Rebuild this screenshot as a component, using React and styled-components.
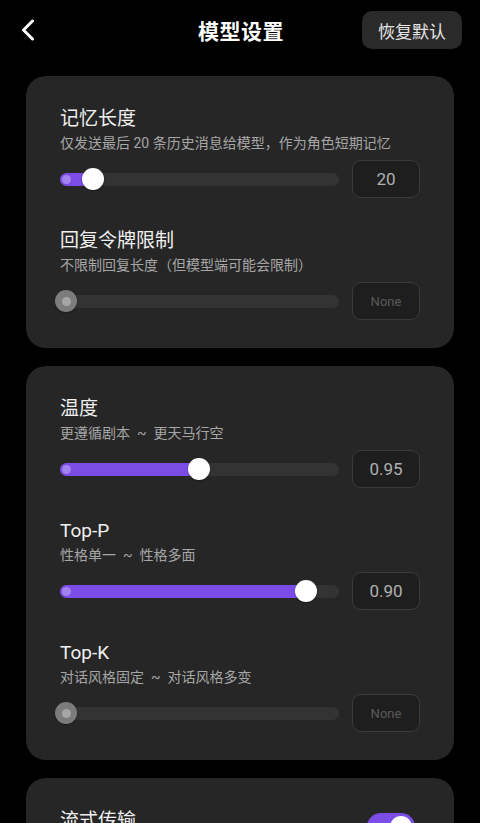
import React from 'react';
import styled, { createGlobalStyle } from 'styled-components';

const GlobalStyle = createGlobalStyle`
  html, body {
    margin: 0;
    padding: 0;
    background: #000;
  }
  body {
    font-family: Roboto, "Noto Sans CJK SC", "Noto Sans", sans-serif;
    color: #f0f0f0;
    -webkit-font-smoothing: antialiased;
  }
  * { box-sizing: border-box; }
`;

const Page = styled.div`
  min-height: 823px;
  background: #000;
  padding-bottom: 24px;
`;

const Header = styled.header`
  display: grid;
  grid-template-columns: 1fr auto 1fr;
  align-items: center;
  height: 38px;
  margin: 11px 18px 27px 20px;
`;

const BackButton = styled.button`
  justify-self: start;
  display: flex;
  align-items: center;
  justify-content: center;
  width: 16px;
  height: 24px;
  padding: 0;
  border: none;
  background: transparent;
  cursor: pointer;
`;

const Title = styled.h1`
  margin: 0;
  font-size: 21px;
  font-weight: 700;
  color: #fff;
  letter-spacing: 0.5px;
`;

const ResetButton = styled.button`
  justify-self: end;
  height: 38px;
  padding: 0 16px;
  border: none;
  border-radius: 10px;
  background: #2a2a2a;
  color: #e6e6e6;
  font-family: inherit;
  font-size: 17px;
  cursor: pointer;
`;

const Cards = styled.div`
  display: flex;
  flex-direction: column;
  gap: 18px;
  margin: 0 26px;
`;

const Card = styled.section`
  display: flex;
  flex-direction: column;
  gap: 28px;
  padding: 28px 34px 28px;
  border-radius: 20px;
  background: #262626;
`;

const Item = styled.div`
  display: flex;
  flex-direction: column;
`;

const ItemTitle = styled.div`
  padding-top: 2px;
  font-size: 19px;
  line-height: 26px;
  color: #f0f0f0;
`;

const ItemDesc = styled.div`
  margin-top: 2px;
  font-size: 14px;
  line-height: 18px;
  color: #a6a6a6;
  white-space: pre;
`;

const SliderRow = styled.div`
  display: flex;
  align-items: center;
  gap: 13px;
  height: 38px;
  margin-top: 8px;
`;

const Track = styled.div`
  position: relative;
  flex: 1;
  height: 13px;
  border-radius: 7px;
  background: #333333;
`;

const Fill = styled.div`
  position: absolute;
  left: 0;
  top: 0;
  bottom: 0;
  border-radius: 7px;
  background: #7b4de6;
`;

const StartDot = styled.span`
  position: absolute;
  left: 2px;
  top: 50%;
  width: 9px;
  height: 9px;
  margin-top: -4.5px;
  border-radius: 50%;
  background: ${p => (p.$off ? '#a6a6a6' : '#a283f0')};
`;

const Thumb = styled.span`
  position: absolute;
  top: 50%;
  width: 22px;
  height: 22px;
  margin: -11px 0 0 -11px;
  border-radius: 50%;
  background: ${p => (p.$off ? '#7c7c7c' : '#fff')};
  box-shadow: 0 1px 2px rgba(0, 0, 0, 0.3);
`;

const ValueBox = styled.div`
  flex: 0 0 68px;
  height: 38px;
  display: flex;
  align-items: center;
  justify-content: center;
  border: 1.5px solid #3a3a3f;
  border-radius: 9px;
  background: #1e1e1e;
  font-family: Roboto, "Noto Sans CJK SC", sans-serif;
  font-size: ${p => (p.$off ? '13px' : '17px')};
  color: ${p => (p.$off ? '#5a5a5a' : '#b0b0b0')};
`;

const ToggleRow = styled.div`
  display: flex;
  justify-content: space-between;
  align-items: flex-start;
`;

const Switch = styled.button`
  position: relative;
  width: 48px;
  height: 28px;
  margin: 7px 5px 0 0;
  padding: 0;
  border: none;
  border-radius: 14px;
  background: ${p => (p.$on ? '#7b4de6' : '#444')};
  cursor: pointer;

  &::after {
    content: '';
    position: absolute;
    top: 3px;
    left: ${p => (p.$on ? '23px' : '3px')};
    width: 22px;
    height: 22px;
    border-radius: 50%;
    background: #fff;
  }
`;

function Slider({ value, off }) {
  const pos = `calc(6px + (100% - 12px) * ${value})`;
  return (
    <Track role="slider" aria-valuenow={value}>
      {!off && <Fill style={{ width: pos }} />}
      {!off && <StartDot />}
      <Thumb $off={off} style={{ left: pos }}>
        {off && <StartDot $off style={{ left: 6.5 }} />}
      </Thumb>
    </Track>
  );
}

function SliderItem({ title, desc, value, display }) {
  const off = display === 'None';
  return (
    <Item>
      <ItemTitle>{title}</ItemTitle>
      <ItemDesc>{desc}</ItemDesc>
      <SliderRow>
        <Slider value={value} off={off} />
        <ValueBox $off={off}>{display}</ValueBox>
      </SliderRow>
    </Item>
  );
}

const groups = [
  [
    { title: '记忆长度', desc: '仅发送最后 20 条历史消息给模型，作为角色短期记忆', value: 0.1, display: '20' },
    { title: '回复令牌限制', desc: '不限制回复长度（但模型端可能会限制）', value: 0, display: 'None' },
  ],
  [
    { title: '温度', desc: '更遵循剧本  ~  更天马行空', value: 0.498, display: '0.95' },
    { title: 'Top-P', desc: '性格单一  ~  性格多面', value: 0.9, display: '0.90' },
    { title: 'Top-K', desc: '对话风格固定  ~  对话风格多变', value: 0, display: 'None' },
  ],
];

export default function App() {
  return (
    <Page>
      <GlobalStyle />
      <Header>
        <BackButton aria-label="返回">
          <svg width="14" height="22" viewBox="0 0 14 22" fill="none">
            <path d="M11.5 2 L2.5 11 L11.5 20" stroke="#fff" strokeWidth="3" strokeLinecap="round" strokeLinejoin="round" />
          </svg>
        </BackButton>
        <Title>模型设置</Title>
        <ResetButton>恢复默认</ResetButton>
      </Header>
      <Cards>
        {groups.map((items, i) => (
          <Card key={i}>
            {items.map(it => (
              <SliderItem key={it.title} {...it} />
            ))}
          </Card>
        ))}
        <Card>
          <ToggleRow>
            <ItemTitle>流式传输</ItemTitle>
            <Switch $on aria-pressed="true" />
          </ToggleRow>
        </Card>
      </Cards>
    </Page>
  );
}
